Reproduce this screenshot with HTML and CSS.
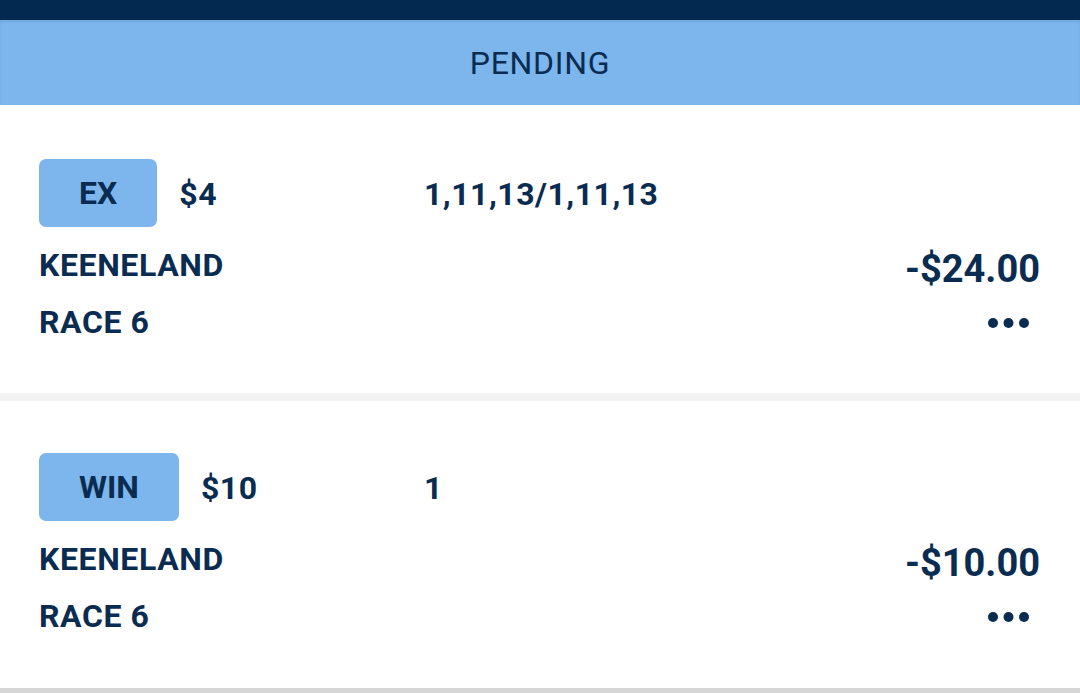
FILE: index.html
```html
<!DOCTYPE html>
<html lang="en">

<head>
    <meta charset="UTF-8">
    <meta name="viewport" content="width=device-width, initial-scale=1.0">
    <title>Pending Bets</title>
    <link rel="stylesheet" href="styles.css">
</head>

<body>
    <div class="status-bar"></div>
    <div class="section-header">PENDING</div>

    <div class="bet">
        <div class="bet-top">
            <div class="bet-type">
                <span class="badge">EX</span>
                <span class="stake">$4</span>
            </div>
            <span class="selection">1,11,13/1,11,13</span>
        </div>
        <div class="bet-bottom">
            <div class="bet-info">
                <span class="track">KEENELAND</span>
                <span class="race">RACE 6</span>
            </div>
            <div class="bet-side">
                <span class="total">-$24.00</span>
                <svg class="more" width="44" height="12" viewBox="0 0 44 12">
                    <circle cx="6" cy="6" r="5"></circle>
                    <circle cx="21.5" cy="6" r="5"></circle>
                    <circle cx="37" cy="6" r="5"></circle>
                </svg>
            </div>
        </div>
    </div>

    <div class="divider"></div>

    <div class="bet">
        <div class="bet-top">
            <div class="bet-type">
                <span class="badge">WIN</span>
                <span class="stake">$10</span>
            </div>
            <span class="selection">1</span>
        </div>
        <div class="bet-bottom">
            <div class="bet-info">
                <span class="track">KEENELAND</span>
                <span class="race">RACE 6</span>
            </div>
            <div class="bet-side">
                <span class="total">-$10.00</span>
                <svg class="more" width="44" height="12" viewBox="0 0 44 12">
                    <circle cx="6" cy="6" r="5"></circle>
                    <circle cx="21.5" cy="6" r="5"></circle>
                    <circle cx="37" cy="6" r="5"></circle>
                </svg>
            </div>
        </div>
    </div>

    <div class="footer-line"></div>
</body>

</html>
```

FILE: styles.css
```css
* {
    box-sizing: border-box;
    margin: 0;
    padding: 0;
    font-family: Roboto, "Liberation Sans", sans-serif;
}

body {
    width: 1080px;
    height: 693px;
    overflow: hidden;
    background: #ffffff;
    color: #0b2c51;
}

.status-bar {
    height: 20px;
    background: #032950;
}

.section-header {
    height: 85px;
    background: #7cb6ec;
    box-shadow: inset 0px 2px 2px rgba(0, 0, 0, 0.08);
    display: flex;
    justify-content: center;
    align-items: center;
    font-size: 32px;
    letter-spacing: 0.7px;
    color: #0b2c51;
}

.bet {
    height: 287px;
    padding: 52px 40px 0 39px;
}

.section-header + .bet {
    height: 288px;
    padding-top: 54px;
}

.bet-top {
    display: grid;
    grid-template-columns: 385px 1fr;
    align-items: center;
}

.bet-type {
    display: flex;
    align-items: center;
}

.badge {
    display: flex;
    justify-content: center;
    align-items: center;
    height: 68px;
    padding: 0 40px;
    border-radius: 7px;
    background: #7cb6ec;
    font-size: 32px;
    font-weight: bold;
    line-height: 38px;
}

.stake,
.selection {
    font-size: 32px;
    font-weight: bold;
    letter-spacing: 0.5px;
    padding-top: 2px;
}

.stake {
    margin-left: 22px;
}

.bet-bottom {
    display: flex;
    justify-content: space-between;
    margin-top: 19px;
}

.bet-info {
    display: flex;
    flex-direction: column;
    gap: 19px;
    font-size: 32px;
    line-height: 38px;
    font-weight: bold;
    letter-spacing: 0.6px;
}

.bet-side {
    display: flex;
    flex-direction: column;
    align-items: flex-end;
}

.total {
    font-size: 38px;
    font-weight: bold;
    line-height: 44px;
    margin-top: 1px;
}

.more {
    fill: #0b2c51;
    margin-top: 26px;
    margin-right: 9px;
}

.divider {
    height: 8px;
    background: #f2f2f2;
}

.footer-line {
    height: 6px;
    background: #d6d6d6;
}
```
